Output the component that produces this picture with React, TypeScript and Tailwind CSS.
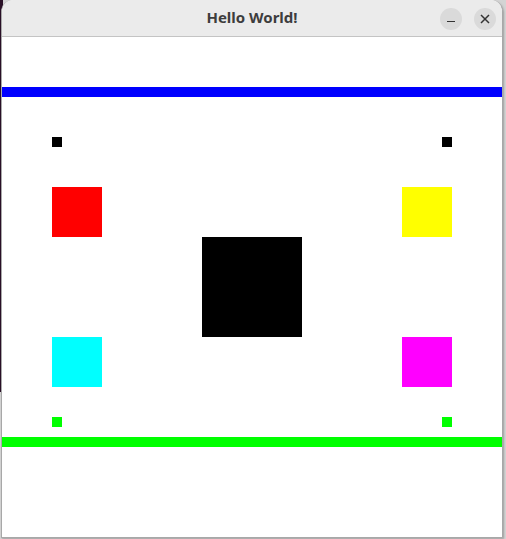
import React from "react";

export default function App() {
  return (
    <div className="relative w-[506px] h-[539px] overflow-hidden bg-[#d4d4d4]">
      <div className="absolute left-0 top-0 w-[3px] h-[392px] bg-[#2a1027]" />
      <div className="absolute left-[1px] top-0 w-[502px] h-[538px] flex flex-col rounded-t-[12px] overflow-hidden border-x border-b border-[#a8a8a8] bg-white shadow-[1px_1px_2px_rgba(0,0,0,0.25)]">
        <div className="relative h-[37px] shrink-0 bg-[#ebebeb] border-b border-[#c4c4c4] flex items-center justify-center">
          <span className="text-[15px] font-bold text-[#3d3d3d] [font-family:'Noto_Sans',sans-serif] leading-none -mt-[1px]">
            Hello World!
          </span>
          <div className="absolute right-[6px] top-[8px] flex gap-[12px]">
            <div className="w-[22px] h-[22px] rounded-full bg-[#dadada] flex items-center justify-center">
              <div className="w-[8px] h-[1.5px] bg-[#333] mt-[5px]" />
            </div>
            <div className="w-[22px] h-[22px] rounded-full bg-[#dadada] flex items-center justify-center">
              <svg width="10" height="10" viewBox="0 0 10 10">
                <path d="M1 1L9 9M9 1L1 9" stroke="#333" strokeWidth="1.5" />
              </svg>
            </div>
          </div>
        </div>
        <svg width="500" height="500" viewBox="0 0 500 500" className="block shrink-0">
          <rect x="0" y="0" width="500" height="500" fill="#ffffff" />
          <rect x="0" y="50" width="500" height="10" fill="#0000ff" />
          <rect x="50" y="100" width="10" height="10" fill="#000000" />
          <rect x="440" y="100" width="10" height="10" fill="#000000" />
          <rect x="50" y="150" width="50" height="50" fill="#ff0000" />
          <rect x="400" y="150" width="50" height="50" fill="#ffff00" />
          <rect x="200" y="200" width="100" height="100" fill="#000000" />
          <rect x="50" y="300" width="50" height="50" fill="#00ffff" />
          <rect x="400" y="300" width="50" height="50" fill="#ff00ff" />
          <rect x="50" y="380" width="10" height="10" fill="#00ff00" />
          <rect x="440" y="380" width="10" height="10" fill="#00ff00" />
          <rect x="0" y="400" width="500" height="10" fill="#00ff00" />
        </svg>
      </div>
    </div>
  );
}
